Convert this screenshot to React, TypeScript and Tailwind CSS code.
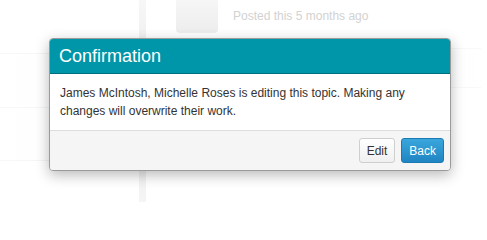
import React from "react";

export default function App() {
  return (
    <div
      className="relative w-[487px] h-[208px] overflow-hidden bg-white"
      style={{ fontFamily: '"Liberation Sans", Arial, sans-serif' }}
    >
      {/* background page */}
      <div className="flex h-full">
        {/* left column */}
        <div className="w-[139px] flex flex-col">
          <div className="h-[53px] bg-white" />
          <div className="h-px bg-gradient-to-r from-[#f9f9f9] to-[#ebebeb]" />
          <div className="h-[53px] bg-gradient-to-r from-white to-[#fcfcfc]" />
          <div className="h-px bg-gradient-to-r from-[#f9f9f9] to-[#ebebeb]" />
          <div className="h-[52px] bg-gradient-to-r from-white to-[#fcfcfc]" />
          <div className="h-px bg-gradient-to-r from-[#f9f9f9] to-[#ebebeb]" />
          <div className="flex-1 bg-white" />
        </div>
        {/* timeline bar */}
        <div className="w-[7px] h-[202px] bg-gradient-to-b from-[#f7f7f7] via-[#e7e7e7] to-[#f5f5f5]" />
        {/* right content */}
        <div className="flex-1 flex flex-col">
          <div className="h-[48px] flex items-start">
            <div className="ml-[30px] w-[42px] h-[33px] rounded-b-[4px] bg-gradient-to-b from-[#f6f6f6] to-[#ededed]" />
            <div className="ml-[15px] mt-[9px] text-[12px] leading-[14px] text-[#d2d2d2]">
              Posted this 5 months ago
            </div>
          </div>
          <div className="h-px mr-[6px] bg-gradient-to-r from-[#e6e6e6] to-[#f9f9f9]" />
          <div className="h-[38px] mr-[6px] bg-gradient-to-r from-[#efefef] via-[#f9f9f9] to-white" />
          <div className="h-px mr-[6px] bg-gradient-to-r from-[#e6e6e6] to-[#f9f9f9]" />
        </div>
      </div>

      {/* modal */}
      <div className="absolute left-[49px] top-[38px] w-[402px] rounded-[4px] border border-[#9a9a9a] bg-white shadow-[0_4px_14px_rgba(0,0,0,0.28)] overflow-hidden">
        <div className="h-[35px] flex items-center px-[9px] bg-[#0096a9] border-b border-[#00707f]">
          <span className="text-[18px] leading-[20px] text-white">Confirmation</span>
        </div>
        <div className="px-[10px] pt-[10px] pb-[10px] text-[12px] leading-[18px] text-[#333]">
          James McIntosh, Michelle Roses is editing this topic. Making any changes will overwrite their work.
        </div>
        <div className="flex justify-end gap-[6px] px-[6px] py-[7px] bg-[#f5f5f5] border-t border-[#dddddd]">
          <button className="h-[25px] px-[7px] rounded-[3px] border border-[#cfcfcf] bg-gradient-to-b from-white to-[#f0f0f0] text-[12px] text-[#333]">
            Edit
          </button>
          <button className="h-[25px] px-[7px] rounded-[3px] border border-[#1c7ab3] bg-gradient-to-b from-[#3aa6dc] to-[#1f85c3] text-[12px] text-white">
            Back
          </button>
        </div>
      </div>
    </div>
  );
}
